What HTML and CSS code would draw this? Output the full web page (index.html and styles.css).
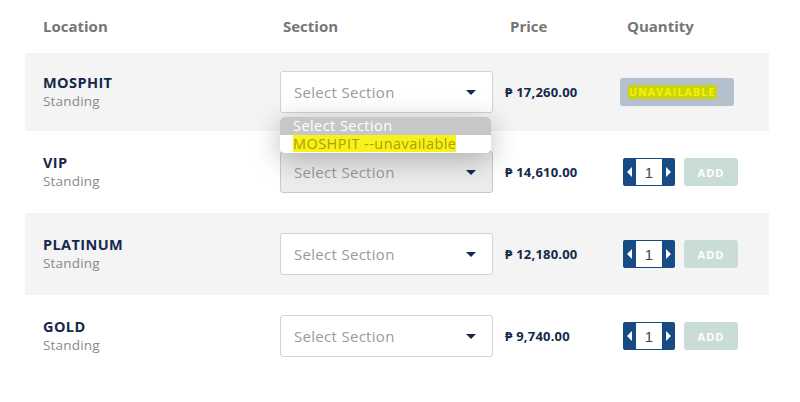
FILE: index.html
```html
<!DOCTYPE html>
<html>
<head>
<meta charset="utf-8">
<link rel="stylesheet" href="styles.css">
</head>
<body>
<div class="table">
  <div class="head">
    <div class="h-loc">Location</div>
    <div class="h-sec">Section</div>
    <div class="h-price">Price</div>
    <div class="h-qty">Quantity</div>
  </div>

  <div class="row grey first">
    <div class="loc"><div class="name">MOSPHIT</div><div class="sub">Standing</div></div>
    <div class="sec">
      <div class="select"><span>Select Section</span><span class="caret"></span></div>
      <div class="popup">
        <div class="opt sel">Select Section</div>
        <div class="opt"><span class="hl">MOSHPIT --unavailable</span></div>
      </div>
    </div>
    <div class="price">₱ 17,260.00</div>
    <div class="qty"><div class="badge"><span class="hl2">UNAVAILABLE</span></div></div>
  </div>

  <div class="row">
    <div class="loc"><div class="name">VIP</div><div class="sub">Standing</div></div>
    <div class="sec"><div class="select shaded"><span>Select Section</span><span class="caret"></span></div></div>
    <div class="price">₱ 14,610.00</div>
    <div class="qty">
      <div class="stepper"><span class="btn"><i class="tl"></i></span><span class="num">1</span><span class="btn"><i class="tr"></i></span></div>
      <div class="add">ADD</div>
    </div>
  </div>

  <div class="row grey">
    <div class="loc"><div class="name">PLATINUM</div><div class="sub">Standing</div></div>
    <div class="sec"><div class="select"><span>Select Section</span><span class="caret"></span></div></div>
    <div class="price">₱ 12,180.00</div>
    <div class="qty">
      <div class="stepper"><span class="btn"><i class="tl"></i></span><span class="num">1</span><span class="btn"><i class="tr"></i></span></div>
      <div class="add">ADD</div>
    </div>
  </div>

  <div class="row">
    <div class="loc"><div class="name">GOLD</div><div class="sub">Standing</div></div>
    <div class="sec"><div class="select"><span>Select Section</span><span class="caret"></span></div></div>
    <div class="price">₱ 9,740.00</div>
    <div class="qty">
      <div class="stepper"><span class="btn"><i class="tl"></i></span><span class="num">1</span><span class="btn"><i class="tr"></i></span></div>
      <div class="add">ADD</div>
    </div>
  </div>
</div>
</body>
</html>
```

FILE: styles.css
```css
* { box-sizing: border-box; }
body {
  margin: 0;
  background: #fff;
  font-family: "Open Sans", "Noto Sans", sans-serif;
}
.table {
  margin-left: 25px;
  width: 744px;
}
.head, .row {
  display: grid;
  grid-template-columns: 237px 213px 12px 115px 1fr;
  padding-left: 18px;
  align-items: center;
}
.head {
  height: 53px;
  font-weight: 700;
  font-size: 15px;
  color: #767676;
  padding-bottom: 1px;
}
.h-loc { grid-column: 1; }
.h-sec { grid-column: 2; padding-left: 3px; }
.h-price { grid-column: 4; padding-left: 5px; }
.h-qty { grid-column: 5; padding-left: 7px; }
.row { height: 82px; }
.row.first { height: 78px; }
.row.grey { background: #f4f4f4; }
.loc { grid-column: 1; }
.name {
  font-weight: 700;
  font-size: 14.5px;
  color: #14294b;
  line-height: 18px;
  letter-spacing: 0.4px;
}
.sub {
  font-size: 13.5px;
  color: #8a8a8a;
  line-height: 18px;
  letter-spacing: 0.2px;
}
.sec { grid-column: 2; position: relative; }
.select {
  height: 42px;
  border: 1px solid #d2d2d2;
  border-radius: 3px;
  background: #fff;
  display: flex;
  align-items: center;
  justify-content: space-between;
  padding: 0 16px 0 13px;
  font-size: 15px;
  letter-spacing: 0.3px;
  color: #9a9a9a;
}
.select.shaded { background: #ececec; border-color: #c8c8c8; }
.caret {
  width: 0; height: 0;
  border-left: 5px solid transparent;
  border-right: 5px solid transparent;
  border-top: 5px solid #14294b;
}
.popup {
  position: absolute;
  left: 0;
  top: 46px;
  width: 211px;
  background: #fff;
  border-radius: 5px;
  overflow: hidden;
  box-shadow: 0 6px 28px rgba(0,0,0,0.28);
  z-index: 5;
  font-size: 14.5px;
  letter-spacing: 0.45px;
  line-height: 18px;
}
.opt { padding: 0 13px; height: 18px; line-height: 18px; }
.opt.sel { background: #c7c7c7; color: #fff; }
.hl { background: #f8f21c; color: #a9a100; display: inline-block; line-height: 17px; }
.price {
  grid-column: 4;
  font-weight: 700;
  font-size: 13px;
  letter-spacing: 0.2px;
  color: #14294b;
}
.qty { grid-column: 5; display: flex; align-items: center; gap: 9px; }
.badge {
  width: 114px;
  height: 28px;
  background: #b4c0ce;
  border-radius: 3px;
  display: flex;
  align-items: center;
  padding-left: 8px;
  font-size: 10.5px;
  font-weight: 700;
  letter-spacing: 1.2px;
}
.hl2 { background: #c9d40c; color: #f4f400; padding: 0 1px; }
.stepper {
  margin-left: 3px;
  width: 52px;
  height: 28px;
  display: flex;
  background: #164b86;
  border-radius: 2px;
  padding: 1px 0;
}
.btn {
  width: 13px;
  display: flex;
  align-items: center;
  justify-content: center;
}
.tl, .tr { width: 0; height: 0; border-top: 5px solid transparent; border-bottom: 5px solid transparent; }
.tl { border-right: 5px solid #fff; }
.tr { border-left: 5px solid #fff; }
.num {
  width: 26px;
  background: #fff;
  display: flex;
  align-items: center;
  justify-content: center;
  font-family: "Liberation Sans", sans-serif;
  font-size: 15px;
  color: #444;
}
.add {
  width: 54px;
  height: 28px;
  background: #c9dcd7;
  border-radius: 3px;
  color: #fff;
  font-weight: 700;
  font-size: 11px;
  letter-spacing: 1px;
  display: flex;
  align-items: center;
  justify-content: center;
}
```
